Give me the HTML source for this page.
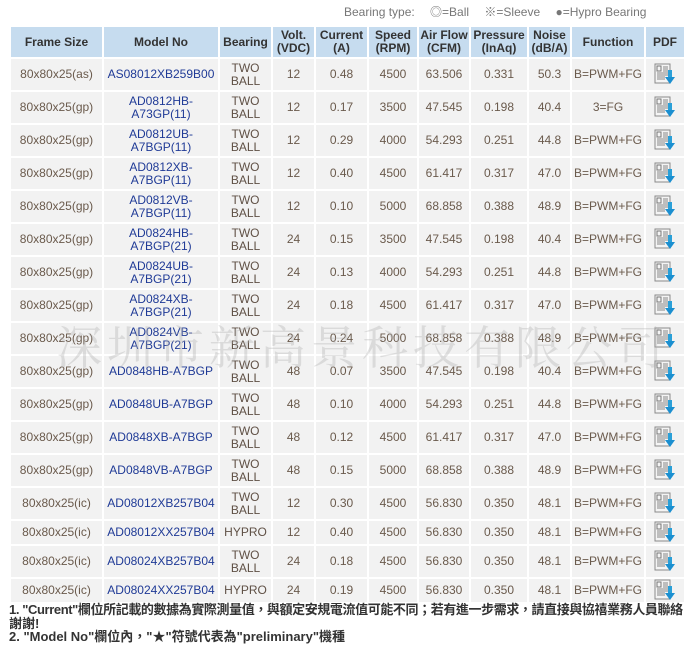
<!DOCTYPE html>
<html><head><meta charset="utf-8"><style>
body{margin:0;width:684px;height:655px;background:#fff;font-family:"Liberation Sans","Noto Sans CJK TC",sans-serif;position:relative;overflow:hidden}
.top{position:absolute;top:3px;left:344px;font-size:12px;color:#777;white-space:nowrap}
.top span{margin-left:12px}
table{position:absolute;left:9px;top:25px;border-collapse:collapse;table-layout:fixed;width:675px}
td,th{border:2px solid #fff;text-align:center;padding:0;font-size:12px;line-height:13px;overflow:hidden}
th{background:#c6dcef;color:#333;font-weight:bold;height:30px}
td{background:#f2f2f2;color:#6a5a4c;height:31px}
tr.s td{height:23px}
td.m{color:#1f3a96}
td.b{color:#5f5045}
.wm{position:absolute;left:56px;top:312px;font-size:46px;color:rgba(175,175,175,0.35);letter-spacing:5px;font-family:"Noto Serif CJK SC","Noto Sans CJK TC",serif;white-space:nowrap;pointer-events:none}
.ft{position:absolute;left:9px;top:603px;width:675px;font-size:13px;line-height:13.5px;font-weight:bold;color:#333;white-space:nowrap}
.ft .l1{letter-spacing:-0.4px}
svg{display:block;margin:0 auto}
</style></head><body>
<div class="top">Bearing type: <span>◎=Ball</span> <span>※=Sleeve</span> <span>●=Hypro Bearing</span></div>
<table>
<colgroup><col style="width:93px"><col style="width:116px"><col style="width:53px"><col style="width:43px"><col style="width:53px"><col style="width:50px"><col style="width:52px"><col style="width:58px"><col style="width:43px"><col style="width:74px"><col style="width:40px"></colgroup>
<tr><th>Frame Size</th><th>Model No</th><th>Bearing</th><th>Volt.<br>(VDC)</th><th>Current<br>(A)</th><th>Speed<br>(RPM)</th><th>Air Flow<br>(CFM)</th><th>Pressure<br>(InAq)</th><th>Noise<br>(dB/A)</th><th>Function</th><th>PDF</th></tr>
<tbody id="tb"></tbody>
</table>
<div class="wm">深圳市新高景科技有限公司</div>
<div class="ft"><span class="l1">1. "Current"欄位所記載的數據為實際測量值，與額定安規電流值可能不同；若有進一步需求，請直接與協禧業務人員聯絡，</span><br>謝謝!<br>2. "Model No"欄位內，"★"符號代表為"preliminary"機種</div>
<script>
var icon='<svg width="22" height="23" viewBox="0 0 22 23"><rect x="1" y="1" width="15" height="19" fill="#f4f4f4" stroke="#8a8a8a"/><rect x="3" y="3" width="4" height="5" fill="none" stroke="#777"/><path d="M9 4h5M9 6h5M9 8h5M3 10h11M3 12h11M3 14h8M3 16h8" stroke="#888"/><rect x="14" y="7" width="4" height="8" fill="#2aa0d8"/><path d="M11 14h10l-5 7z" fill="#1b8fd0"/></svg>';
var R=[
["80x80x25(as)","AS08012XB259B00",0,12,"0.48",4500,"63.506","0.331","50.3","B=PWM+FG"],
["80x80x25(gp)","AD0812HB-<br>A73GP(11)",0,12,"0.17",3500,"47.545","0.198","40.4","3=FG"],
["80x80x25(gp)","AD0812UB-<br>A7BGP(11)",0,12,"0.29",4000,"54.293","0.251","44.8","B=PWM+FG"],
["80x80x25(gp)","AD0812XB-<br>A7BGP(11)",0,12,"0.40",4500,"61.417","0.317","47.0","B=PWM+FG"],
["80x80x25(gp)","AD0812VB-<br>A7BGP(11)",0,12,"0.10",5000,"68.858","0.388","48.9","B=PWM+FG"],
["80x80x25(gp)","AD0824HB-<br>A7BGP(21)",0,24,"0.15",3500,"47.545","0.198","40.4","B=PWM+FG"],
["80x80x25(gp)","AD0824UB-<br>A7BGP(21)",0,24,"0.13",4000,"54.293","0.251","44.8","B=PWM+FG"],
["80x80x25(gp)","AD0824XB-<br>A7BGP(21)",0,24,"0.18",4500,"61.417","0.317","47.0","B=PWM+FG"],
["80x80x25(gp)","AD0824VB-<br>A7BGP(21)",0,24,"0.24",5000,"68.858","0.388","48.9","B=PWM+FG"],
["80x80x25(gp)","AD0848HB-A7BGP",0,48,"0.07",3500,"47.545","0.198","40.4","B=PWM+FG"],
["80x80x25(gp)","AD0848UB-A7BGP",0,48,"0.10",4000,"54.293","0.251","44.8","B=PWM+FG"],
["80x80x25(gp)","AD0848XB-A7BGP",0,48,"0.12",4500,"61.417","0.317","47.0","B=PWM+FG"],
["80x80x25(gp)","AD0848VB-A7BGP",0,48,"0.15",5000,"68.858","0.388","48.9","B=PWM+FG"],
["80x80x25(ic)","AD08012XB257B04",0,12,"0.30",4500,"56.830","0.350","48.1","B=PWM+FG"],
["80x80x25(ic)","AD08012XX257B04",1,12,"0.40",4500,"56.830","0.350","48.1","B=PWM+FG"],
["80x80x25(ic)","AD08024XB257B04",0,24,"0.18",4500,"56.830","0.350","48.1","B=PWM+FG"],
["80x80x25(ic)","AD08024XX257B04",1,24,"0.19",4500,"56.830","0.350","48.1","B=PWM+FG"]];
var h='';R.forEach(function(r){h+='<tr'+(r[2]?' class="s"':'')+'><td>'+r[0]+'</td><td class="m">'+r[1]+'</td><td class="b">'+(r[2]?'HYPRO':'TWO<br>BALL')+'</td>';for(var i=3;i<10;i++)h+='<td>'+r[i]+'</td>';h+='<td>'+icon+'</td></tr>';});
document.getElementById('tb').innerHTML=h;
</script>
</body></html>
